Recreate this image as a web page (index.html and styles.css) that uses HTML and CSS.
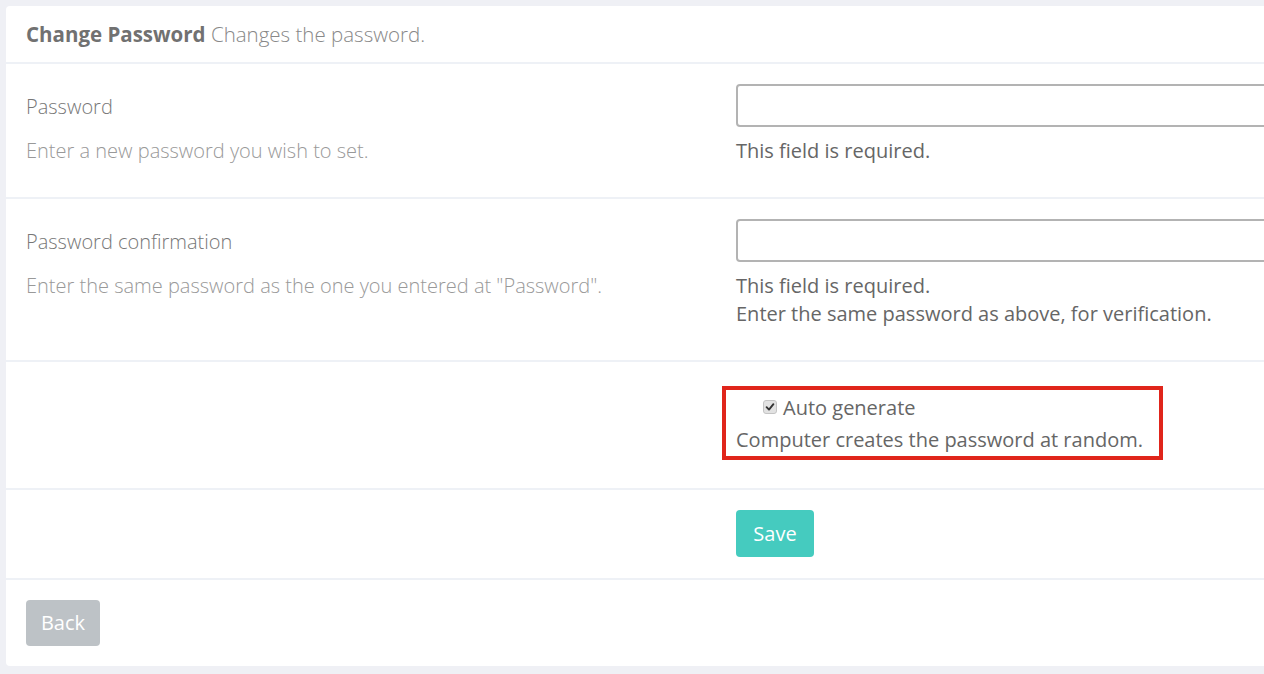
FILE: index.html
```html
<!DOCTYPE html>
<html lang="en">
<head>
	<meta charset="UTF-8">
	<title>Change Password</title>
	<link rel="stylesheet" href="styles.css">
</head>
<body>
	<div class="card">
		<div class="card-header">
			<strong>Change Password</strong> <span class="subtitle">Changes the password.</span>
		</div>

		<div class="form-row">
			<div class="label-col">
				<div class="label">Password</div>
				<div class="desc">Enter a new password you wish to set.</div>
			</div>
			<div class="field-col">
				<input type="password" class="input">
				<div class="help">This field is required.</div>
			</div>
		</div>

		<div class="form-row">
			<div class="label-col">
				<div class="label">Password confirmation</div>
				<div class="desc">Enter the same password as the one you entered at "Password".</div>
			</div>
			<div class="field-col">
				<input type="password" class="input">
				<div class="help">This field is required.<br>Enter the same password as above, for verification.</div>
			</div>
		</div>

		<div class="form-row row-check">
			<div class="label-col"></div>
			<div class="field-col">
				<div class="highlight">
					<label class="check">
						<span class="check-box">
							<svg width="10" height="10" viewBox="0 0 10 10"><path d="M1.6 5.2 L4 7.6 L8.4 2.2" fill="none" stroke="#333" stroke-width="1.9" stroke-linecap="round" stroke-linejoin="round"/></svg>
						</span>
						Auto generate
					</label>
					<div class="help">Computer creates the password at random.</div>
				</div>
			</div>
		</div>

		<div class="form-row row-submit">
			<div class="label-col"></div>
			<div class="field-col">
				<a href="javascript:;" class="btn btn-save">Save</a>
			</div>
		</div>

		<div class="card-footer">
			<a href="javascript:;" class="btn btn-back">Back</a>
		</div>
	</div>
</body>
</html>
```

FILE: styles.css
```css
* {
    margin: 0;
    padding: 0;
    box-sizing: border-box;
    text-decoration: none;
}

body {
    padding: 6px;
    background: #eff0f5;
    font-family: "Open Sans", "Liberation Sans", sans-serif;
    font-size: 20px;
    overflow: hidden;
}

.card {
    width: 1320px;
    background: #fff;
    border-radius: 4px;
}

.card-header {
    height: 58px;
    line-height: 57px;
    padding: 0 20px;
    font-size: 20.5px;
    color: #888;
    font-weight: 300;
    border-bottom: 2px solid #eef1f6;
}

.card-header strong {
    font-weight: 700;
    color: #717171;
}

.form-row {
    display: grid;
    grid-template-columns: 710px 1fr;
    padding: 20px 20px 32px;
    border-bottom: 2px solid #eef1f6;
}

.label {
    height: 43px;
    line-height: 45px;
    font-weight: 300;
    color: #777;
}

.desc {
    margin-top: 10px;
    line-height: 28px;
    font-weight: 300;
    color: #999;
}

.input {
    display: block;
    width: 100%;
    height: 43px;
    border: 2px solid #b3b3b3;
    border-radius: 4px;
    background: #fff;
    outline: none;
}

.help {
    margin-top: 10px;
    line-height: 28px;
    color: #666;
}

.row-check {
    padding: 24px 20px 28px;
}

.highlight {
    width: 441px;
    margin-left: -14px;
    padding: 3px 10px 2px;
    border: 4px solid #e0251b;
}

.check {
    display: flex;
    align-items: center;
    height: 28px;
    padding-left: 27px;
    color: #666;
}

.check-box {
    display: flex;
    align-items: center;
    justify-content: center;
    width: 14px;
    height: 14px;
    margin-right: 6px;
    border: 1px solid #c4c4c4;
    border-radius: 3px;
    background: #e2e2e2;
}

.highlight .help {
    margin-top: 5px;
}

.row-submit {
    padding: 20px 20px 21px;
}

.btn {
    display: inline-block;
    color: #fff;
    border-radius: 4px;
    text-align: center;
}

.btn-save {
    width: 78px;
    height: 47px;
    line-height: 47px;
    background: #45cbbf;
}

.card-footer {
    padding: 20px 20px;
}

.btn-back {
    width: 74px;
    height: 46px;
    line-height: 46px;
    background: #bdc2c6;
}
```
